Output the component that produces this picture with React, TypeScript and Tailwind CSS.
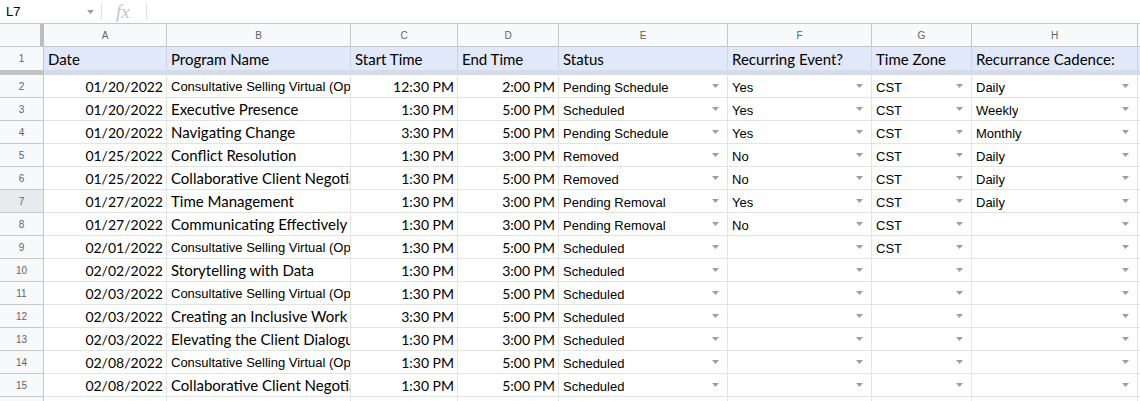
import React from "react";

const COLS = "grid grid-cols-[44px_123px_184px_107px_101px_169px_144px_100px_166px_1fr]";
const LATO = "font-['Lato',sans-serif]";
const ARIAL = "font-['Liberation_Sans',Arial,sans-serif]";
const CONSULT = "Consultative Selling Virtual (Open Enrollment)";

type Row = [string, string, string, string, string, string, string, string];

const ROWS: Row[] = [
  ["01/20/2022", CONSULT, "12:30 PM", "2:00 PM", "Pending Schedule", "Yes", "CST", "Daily"],
  ["01/20/2022", "Executive Presence", "1:30 PM", "5:00 PM", "Scheduled", "Yes", "CST", "Weekly"],
  ["01/20/2022", "Navigating Change", "3:30 PM", "5:00 PM", "Pending Schedule", "Yes", "CST", "Monthly"],
  ["01/25/2022", "Conflict Resolution", "1:30 PM", "3:00 PM", "Removed", "No", "CST", "Daily"],
  ["01/25/2022", "Collaborative Client Negotiations", "1:30 PM", "5:00 PM", "Removed", "No", "CST", "Daily"],
  ["01/27/2022", "Time Management", "1:30 PM", "3:00 PM", "Pending Removal", "Yes", "CST", "Daily"],
  ["01/27/2022", "Communicating Effectively", "1:30 PM", "3:00 PM", "Pending Removal", "No", "CST", ""],
  ["02/01/2022", CONSULT, "1:30 PM", "5:00 PM", "Scheduled", "", "CST", ""],
  ["02/02/2022", "Storytelling with Data", "1:30 PM", "3:00 PM", "Scheduled", "", "", ""],
  ["02/03/2022", CONSULT, "1:30 PM", "5:00 PM", "Scheduled", "", "", ""],
  ["02/03/2022", "Creating an Inclusive Work Environment", "3:30 PM", "5:00 PM", "Scheduled", "", "", ""],
  ["02/03/2022", "Elevating the Client Dialogue", "1:30 PM", "3:00 PM", "Scheduled", "", "", ""],
  ["02/08/2022", CONSULT, "1:30 PM", "5:00 PM", "Scheduled", "", "", ""],
  ["02/08/2022", "Collaborative Client Negotiations", "1:30 PM", "5:00 PM", "Scheduled", "", "", ""],
];

const HEADERS = ["Date", "Program Name", "Start Time", "End Time", "Status", "Recurring Event?", "Time Zone", "Recurrance Cadence:"];

function Caret({ className = "" }: { className?: string }) {
  return (
    <svg width="7" height="4" viewBox="0 0 7 4" className={className}>
      <path d="M0 0h7L3.5 4z" fill="#9e9e9e" />
    </svg>
  );
}

function DropCell({ value }: { value: string }) {
  return (
    <div className={`flex h-full items-center justify-between overflow-hidden border-r border-b border-[#e2e3e3] pl-[4px] pr-[8px] text-[13px] text-black ${ARIAL}`}>
      <span className="truncate pt-[3px]">{value}</span>
      <Caret className="shrink-0" />
    </div>
  );
}

// kind: "num" = right aligned date/time, "small" = the long course name in Arial, else text
function TextCell({ value, kind }: { value: string; kind?: "num" | "small" }) {
  const font =
    kind === "num"
      ? `justify-end pr-[3px] text-[14px] ${LATO}`
      : kind === "small"
        ? `pl-[4px] pt-[2px] text-[13px] ${ARIAL}`
        : `pl-[4px] text-[15px] ${LATO}`;
  return (
    <div className={`flex h-full items-center overflow-hidden whitespace-nowrap border-r border-b border-[#e2e3e3] pt-[1px] text-black ${font}`}>
      {value}
    </div>
  );
}

function RowHead({ n, active }: { n: number; active?: boolean }) {
  return (
    <div
      className={`flex h-full items-center justify-center border-r border-b border-[#c7c7c7] pt-[1px] text-[10px] text-[#5f6368] ${ARIAL} ${
        active ? "bg-[#e8eaed]" : "bg-[#f8f9fa]"
      }`}
    >
      {n}
    </div>
  );
}

export default function App() {
  return (
    <div className="h-[401px] w-[1140px] overflow-hidden bg-white">
      {/* formula bar */}
      <div className={`flex h-[24px] items-center border-b border-[#c7c7c7] ${ARIAL}`}>
        <div className="flex w-[101px] items-center justify-between pl-[6px] pr-[7px] text-[13px] text-black">
          <span>L7</span>
          <Caret />
        </div>
        <div className="h-[17px] w-px bg-[#e0e0e0]" />
        <div className="w-[44px] pl-[14px] font-['Liberation_Serif',serif] text-[19px] italic leading-none text-[#c6c6c6]">fx</div>
        <div className="h-[17px] w-px bg-[#e0e0e0]" />
      </div>

      {/* column letters */}
      <div className={`${COLS} h-[23px] bg-[#f8f9fa] text-[10px] text-[#5f6368] ${ARIAL}`}>
        <div className="flex border-b border-[#c7c7c7]">
          <div className="flex-1" />
          <div className="w-[4px] bg-[#bdbdbd]" />
        </div>
        {["A", "B", "C", "D", "E", "F", "G", "H"].map((l) => (
          <div key={l} className="flex items-center justify-center border-r border-b border-[#c7c7c7] pt-[1px]">
            {l}
          </div>
        ))}
        <div className="border-b border-[#c7c7c7]" />
      </div>

      {/* header row 1 */}
      <div className={`${COLS} h-[23px]`}>
        <RowHead n={1} />
        {HEADERS.map((h) => (
          <div key={h} className={`flex items-center whitespace-nowrap border-r border-[#c9d3ea] bg-[#e1e8fa] pl-[4px] pt-[1px] text-[15px] text-black ${LATO}`}>
            {h}
          </div>
        ))}
        <div className="bg-[#e1e8fa]" />
      </div>

      {/* frozen divider */}
      <div className={`${COLS} h-[5px]`}>
        <div className="bg-[#c4c4c4]" />
        <div className="col-span-9 bg-[#d6dce7]" />
      </div>

      {ROWS.map((r, i) => (
        <div key={i} className={`${COLS} h-[23px]`}>
          <RowHead n={i + 2} active={i + 2 === 7} />
          <TextCell value={r[0]} kind="num" />
          <TextCell value={r[1]} kind={r[1] === CONSULT ? "small" : undefined} />
          <TextCell value={r[2]} kind="num" />
          <TextCell value={r[3]} kind="num" />
          <DropCell value={r[4]} />
          <DropCell value={r[5]} />
          <DropCell value={r[6]} />
          <DropCell value={r[7]} />
          <div className="border-b border-[#e2e3e3]" />
        </div>
      ))}

      <div className={`${COLS} h-[23px]`}>
        <RowHead n={16} />
        {Array.from({ length: 8 }).map((_, i) => (
          <div key={i} className="border-r border-b border-[#e2e3e3]" />
        ))}
        <div />
      </div>
    </div>
  );
}
